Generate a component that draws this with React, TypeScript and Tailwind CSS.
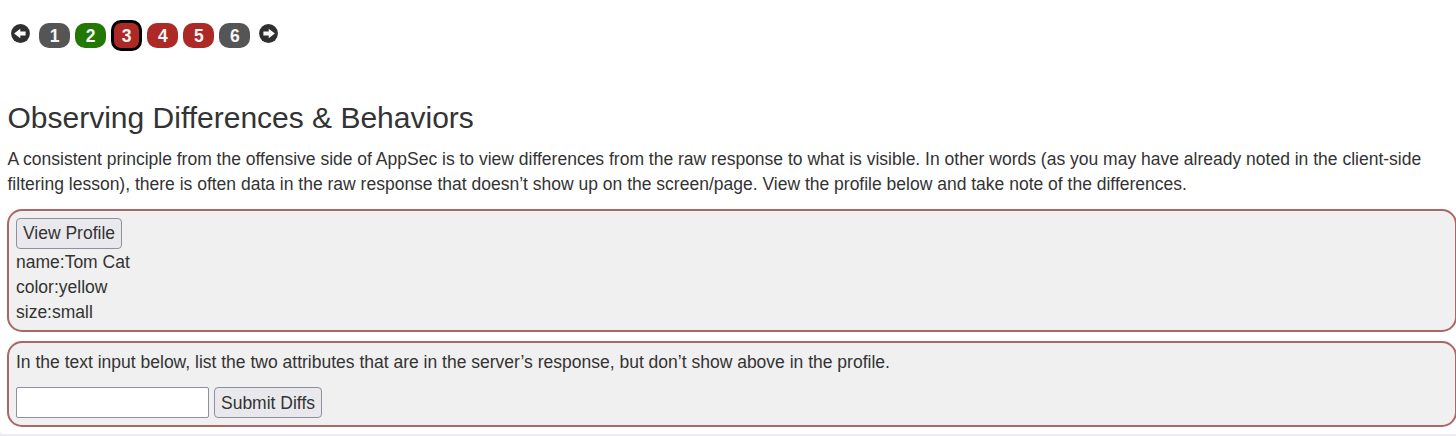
const pages = [
  { n: 1, cls: "bg-[#555555]" },
  { n: 2, cls: "bg-[#237804]" },
  { n: 3, cls: "bg-[#ac2925] h-[31px] w-[31px] border-[3px] border-black" },
  { n: 4, cls: "bg-[#ac2925]" },
  { n: 5, cls: "bg-[#ac2925]" },
  { n: 6, cls: "bg-[#555555]" },
];

function CircleArrow({ className }: { className: string }) {
  return (
    <svg viewBox="0 0 19 19" className={`h-[19px] w-[19px] shrink-0 ${className}`}>
      <circle cx="9.5" cy="9.5" r="9.4" fill="#2f2f31" />
      <path d="M3.1 9.5 9.3 4.7v2.9h5.3v3.8H9.3v2.9z" fill="#fff" />
    </svg>
  );
}

export default function App() {
  return (
    <div className="h-[436px] overflow-hidden bg-[#ececf2] font-['Liberation_Sans',Arial,sans-serif] text-[17.5px] leading-[25px] text-[#333333]">
      <main className="h-[434px] w-[1464px] rounded-bl-[4px] bg-white pl-[7px] pt-5">
        <nav className="flex h-[31px] items-center pl-1">
          <CircleArrow className="mb-1 mr-[9px]" />
          <div className="flex gap-[5.1px]">
            {pages.map((p) => (
              <span
                key={p.n}
                className={`flex h-[25px] w-[31px] shrink-0 items-center justify-center self-center rounded-[10px] pt-0.5 text-[17.5px] font-bold leading-none text-[#f5f5f5] ${p.cls}`}
              >
                {p.n}
              </span>
            ))}
          </div>
          <CircleArrow className="mb-1 ml-[9px] rotate-180" />
        </nav>
        <h1 className="mt-[50px] pl-[0.5px] text-[30px] leading-[33px]">Observing Differences &amp; Behaviors</h1>
        <p className="mt-[13px] w-[1430px] pl-[0.5px]">
          A consistent principle from the offensive side of AppSec is to view differences from the raw response to what is visible. In other words (as you may have already noted in the client-side filtering lesson), there is often data in the raw response that doesn’t show up on the screen/page. View the profile below and take note of the differences.
        </p>
        <section className="mt-3 h-[123px] w-[1450px] rounded-[15px] border-2 border-[#ac6666] bg-[#f0f0f0] px-[7px] pt-[7px]">
          <button className="mb-px block h-[31px] w-[106px] whitespace-nowrap rounded-[4px] border border-[#8f8f9d] bg-[#e9e9ed] leading-[27px]">
            View Profile
          </button>
          <div>name:Tom Cat</div>
          <div>color:yellow</div>
          <div>size:small</div>
        </section>
        <section className="mt-[9px] h-[86px] w-[1450px] rounded-[15px] border-2 border-[#ac6666] bg-[#f0f0f0] px-[7px] pt-[7px]">
          <p>In the text input below, list the two attributes that are in the server’s response, but don’t show above in the profile.</p>
          <form className="mt-3 flex gap-[5px]">
            <input type="text" className="h-[31px] w-[193px] rounded-[2px] border border-[#8f8f9d] bg-white" />
            <button type="button" className="h-[31px] w-[108px] whitespace-nowrap rounded-[4px] border border-[#8f8f9d] bg-[#e9e9ed] pt-0.5">
              Submit Diffs
            </button>
          </form>
        </section>
      </main>
    </div>
  );
}
